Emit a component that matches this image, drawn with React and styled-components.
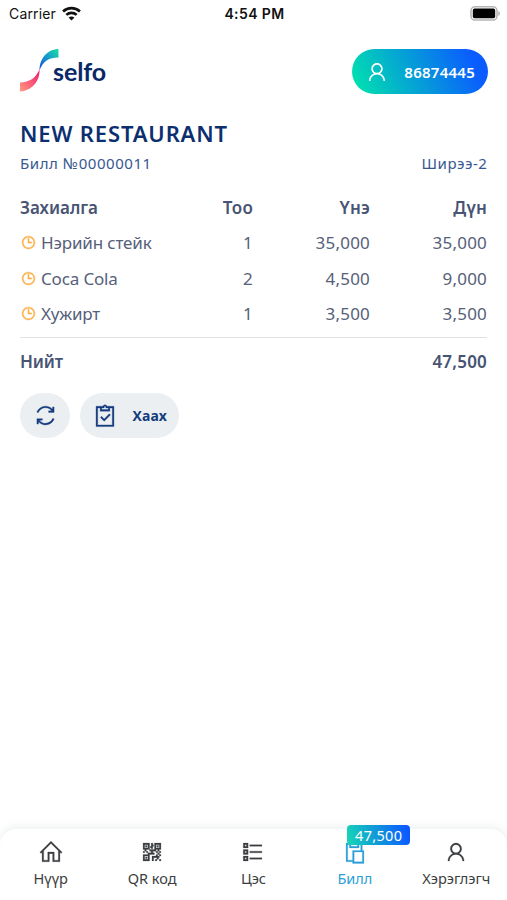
import styled, { createGlobalStyle } from "styled-components";
import {
  LiaUser,
  LiaSyncSolid,
  LiaHomeSolid,
  LiaQrcodeSolid,
  LiaListSolid,
  LiaPasteSolid,
  LiaClock,
  LiaClipboardCheckSolid,
} from "react-icons/lia";

const GlobalStyle = createGlobalStyle`
  * {
    box-sizing: border-box;
  }
  body {
    margin: 0;
    background: #fff;
    font-family: "Noto Sans", "Open Sans", sans-serif;
  }
`;
const Screen = styled.div`
  height: 900px;
  display: flex;
  flex-direction: column;
  overflow: hidden;
  background: #fff;
`;

const StatusBar = styled.div`
  height: 28px;
  padding: 0 7px 2px 9px;
  display: grid;
  grid-template-columns: 1fr auto 1fr;
  align-items: center;
  font-family: Inter, "Liberation Sans", sans-serif;
  font-size: 14px;
  color: #111;
`;
const Carrier = styled.div`
  display: flex;
  align-items: center;
  gap: 6px;
  letter-spacing: 0.15px;
`;
const Clock = styled.div`
  font-weight: 600;
  letter-spacing: 0.4px;
`;
const BatteryArea = styled.div`
  display: flex;
  justify-content: flex-end;
`;

const Header = styled.header`
  margin-top: 21px;
  padding: 0 19px 0 20px;
  height: 45px;
  display: flex;
  justify-content: space-between;
`;
const Brand = styled.div`
  display: flex;
`;
const BrandName = styled.span`
  margin: 7px 0 0 -6px;
  font-family: Lato, sans-serif;
  font-size: 25px;
  line-height: 30px;
  font-weight: 700;
  letter-spacing: -0.1px;
  color: #0a2768;
`;
const PhoneButton = styled.button`
  width: 136px;
  height: 45px;
  padding: 0 13px 0 12px;
  border: 0;
  border-radius: 23px;
  display: flex;
  align-items: center;
  justify-content: space-between;
  color: #fff;
  background: linear-gradient(65deg, #00e6ac 0%, #0a5cff 88%);
  font-family: inherit;
  font-size: 15px;
  font-weight: 600;
  letter-spacing: 0.25px;
`;

const Bill = styled.main`
  flex: 1;
  padding: 25px 20px 0;
`;
const Title = styled.h1`
  margin: 0;
  font-size: 22px;
  line-height: 28px;
  font-weight: 600;
  letter-spacing: 0.85px;
  color: #0b2f6f;
`;
const BillInfo = styled.div`
  margin-top: 6px;
  display: flex;
  justify-content: space-between;
  font-size: 15px;
  line-height: 20px;
  letter-spacing: 0.55px;
  color: #36588f;
  span:last-child {
    margin-right: -0.5px;
  }
`;
const Table = styled.div`
  margin-top: 17px;
  padding-bottom: 6px;
  border-bottom: 1px solid #e0e2e5;
`;
const Row = styled.div`
  height: 35.3px;
  display: grid;
  grid-template-columns: 1fr 60px 117px 117px;
  align-items: center;
  font-size: 17px;
  font-weight: ${({ $bold }) => ($bold ? 600 : 400)};
  letter-spacing: ${({ $bold }) => ($bold ? "0" : "-0.15px")};
  color: ${({ $bold }) => ($bold ? "#485473" : "#566079")};
`;
const Name = styled.div`
  display: flex;
  align-items: center;
  gap: 4px;
  svg {
    color: #ffad45;
    stroke: currentColor;
    stroke-width: 1px;
  }
`;
const Amount = styled.div`
  text-align: right;
  letter-spacing: 0.2px;
`;
const Total = styled.div`
  height: 46px;
  display: flex;
  align-items: center;
  justify-content: space-between;
  font-size: 17px;
  font-weight: 600;
  letter-spacing: -0.1px;
  color: #485473;
`;
const Actions = styled.div`
  margin-top: 9px;
  display: flex;
  gap: 10px;
`;
const ActionButton = styled.button`
  width: ${({ $wide }) => ($wide ? "99px" : "50px")};
  height: 45px;
  padding: 0 12px;
  border: 0;
  border-radius: 25px;
  display: flex;
  align-items: center;
  justify-content: ${({ $wide }) => ($wide ? "space-between" : "center")};
  background: #ebeff2;
  color: #143b7d;
  font-family: inherit;
  font-size: 14px;
  font-weight: 700;
  letter-spacing: 0.2px;
  svg {
    stroke: currentColor;
    stroke-width: 0.4px;
  }
`;

const TabBar = styled.nav`
  height: 71px;
  padding-top: 9px;
  display: grid;
  grid-template-columns: repeat(5, 1fr);
  border-radius: 16px 16px 0 0;
  box-shadow: 0 -2px 8px rgba(30, 80, 90, 0.09);
`;
const Tab = styled.div`
  position: relative;
  display: flex;
  flex-direction: column;
  align-items: center;
  font-size: 14.5px;
  line-height: 20px;
  white-space: nowrap;
  color: ${({ $active }) => ($active ? "#2b9fd9" : "#3b3d40")};
  svg {
    margin: 1px 0 3px;
    stroke: currentColor;
    stroke-width: 0.3px;
  }
`;
const Badge = styled.span`
  position: absolute;
  top: -13px;
  left: 43px;
  width: 63px;
  height: 20px;
  border-radius: 4px;
  text-align: center;
  font-size: 14.5px;
  line-height: 20px;
  letter-spacing: 0.3px;
  color: #fff;
  background: linear-gradient(75deg, #16d9b4 0%, #0a58ff 95%);
`;

const WifiIcon = () => (
  <svg width="19" height="15" viewBox="0 0 18 14" fill="none" stroke="#111" strokeWidth="2.5">
    <path d="M1 5.1C5.5 0.8 12.5 0.8 17 5.1" />
    <path d="M4.1 8.3c2.8-2.6 7-2.6 9.8 0" />
    <path d="M9 13.6 6.2 10.8c1.6-1.4 4-1.4 5.6 0z" fill="#111" stroke="none" />
  </svg>
);

const BatteryIcon = () => (
  <svg width="31" height="15" viewBox="0 0 31 15">
    <rect x="2" y="0.8" width="26" height="13.2" rx="4" fill="#fff" stroke="#b5b5b5" strokeWidth="1.6" />
    <rect x="3.8" y="2.6" width="22.4" height="9.6" rx="1.8" fill="#000" />
    <path d="M29.4 5c2 1 2 4 0 5z" fill="#aaa" />
  </svg>
);

const LogoMark = () => (
  <svg width="39" height="43" viewBox="0 0 39 43">
    <defs>
      <linearGradient id="logoTop" x1="0" y1="1" x2="1" y2="0">
        <stop offset="0" stopColor="#1647d8" />
        <stop offset=".45" stopColor="#1592cf" />
        <stop offset="1" stopColor="#18dfa5" />
      </linearGradient>
      <linearGradient id="logoBottom" x1="0" y1="1" x2="1" y2="0">
        <stop offset="0" stopColor="#ff9a80" />
        <stop offset=".55" stopColor="#fa5276" />
        <stop offset="1" stopColor="#e5186d" />
      </linearGradient>
    </defs>
    <path d="M38.5 0v8.5C29 8.5 23 12 19.5 21.5 19.5 9 28 0 38.5 0z" fill="url(#logoTop)" />
    <path d="M0 33.5c9.5-.5 15.5-4 19.5-13C20 33 11 42 0 42.5z" fill="url(#logoBottom)" />
  </svg>
);

const orders = [
  { name: "Нэрийн стейк", count: 1, price: "35,000", sum: "35,000" },
  { name: "Coca Cola", count: 2, price: "4,500", sum: "9,000" },
  { name: "Хужирт", count: 1, price: "3,500", sum: "3,500" },
];

const tabs = [
  { label: "Нүүр", Icon: LiaHomeSolid },
  { label: "QR код", Icon: LiaQrcodeSolid },
  { label: "Цэс", Icon: LiaListSolid },
  { label: "Билл", Icon: LiaPasteSolid, active: true, badge: "47,500" },
  { label: "Хэрэглэгч", Icon: LiaUser },
];

export default function App() {
  return (
    <>
      <GlobalStyle />
      <Screen>
        <StatusBar>
          <Carrier>
            Carrier
            <WifiIcon />
          </Carrier>
          <Clock>4:54 PM</Clock>
          <BatteryArea>
            <BatteryIcon />
          </BatteryArea>
        </StatusBar>
        <Header>
          <Brand>
            <LogoMark />
            <BrandName>selfo</BrandName>
          </Brand>
          <PhoneButton>
            <LiaUser size={26} />
            86874445
          </PhoneButton>
        </Header>
        <Bill>
          <Title>NEW RESTAURANT</Title>
          <BillInfo>
            <span>Билл №00000011</span>
            <span>Ширээ-2</span>
          </BillInfo>
          <Table>
            <Row $bold>
              <Name>Захиалга</Name>
              <Amount>Тоо</Amount>
              <Amount>Үнэ</Amount>
              <Amount>Дүн</Amount>
            </Row>
            {orders.map((order) => (
              <Row key={order.name}>
                <Name>
                  <LiaClock size={17} />
                  {order.name}
                </Name>
                <Amount>{order.count}</Amount>
                <Amount>{order.price}</Amount>
                <Amount>{order.sum}</Amount>
              </Row>
            ))}
          </Table>
          <Total>
            <span>Нийт</span>
            <Amount>47,500</Amount>
          </Total>
          <Actions>
            <ActionButton>
              <LiaSyncSolid size={25} />
            </ActionButton>
            <ActionButton $wide>
              <LiaClipboardCheckSolid size={26} />
              Хаах
            </ActionButton>
          </Actions>
        </Bill>
        <TabBar>
          {tabs.map(({ label, Icon, active, badge }) => (
            <Tab key={label} $active={active}>
              <Icon size={26} />
              {label}
              {badge && <Badge>{badge}</Badge>}
            </Tab>
          ))}
        </TabBar>
      </Screen>
    </>
  );
}
